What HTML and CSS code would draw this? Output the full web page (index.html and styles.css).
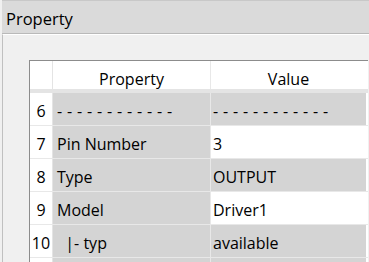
FILE: index.html
```html
<!DOCTYPE html>
<html lang="en">
<head>
    <meta charset="UTF-8">
    <title>Property</title>
    <link rel="stylesheet" href="styles.css">
</head>
<body>
    <div class="title-bar">Property</div>

    <div class="panel">
        <div class="grid">
            <div class="row head">
                <div class="num"></div>
                <div class="cell">Property</div>
                <div class="cell">Value</div>
            </div>
            <div class="row">
                <div class="num">6</div>
                <div class="cell dash">- - - - - - - - - - - -</div>
                <div class="cell dash">- - - - - - - - - - - -</div>
            </div>
            <div class="row">
                <div class="num">7</div>
                <div class="cell">Pin Number</div>
                <div class="cell edit">3</div>
            </div>
            <div class="row">
                <div class="num">8</div>
                <div class="cell">Type</div>
                <div class="cell">OUTPUT</div>
            </div>
            <div class="row">
                <div class="num">9</div>
                <div class="cell">Model</div>
                <div class="cell edit">Driver1</div>
            </div>
            <div class="row">
                <div class="num">10</div>
                <div class="cell">  |- typ</div>
                <div class="cell">available</div>
            </div>
            <div class="row">
                <div class="num"></div>
                <div class="cell"></div>
                <div class="cell"></div>
            </div>
        </div>
    </div>
</body>
</html>
```

FILE: styles.css
```css
body {
    margin: 0;
    background-color: #f0f0f0;
    font-family: "Open Sans", "Noto Sans", sans-serif;
    font-size: 16px;
    color: #000;
    overflow: hidden;
}
.title-bar {
    margin-left: 2px;
    height: 32px;
    padding-left: 4px;
    line-height: 36px;
    font-size: 16.5px;
    background-color: #dadada;
    border-top: 1px solid #c8c8c8;
    border-bottom: 1px solid #b9b9b9;
}
.panel {
    margin-left: 2px;
    height: 300px;
    padding: 25px 0 0 26px;
    border-left: 1px solid #c0c0c0;
    border-top: 1px solid #ffffff;
}
.grid {
    width: 338px;
    background-color: #fff;
    border-left: 1px solid #8c8c8c;
    border-top: 1px solid #8c8c8c;
}
.row {
    display: flex;
    height: 32px;
    border-bottom: 1px solid #e8e8e8;
}
.num {
    width: 22px;
    border-right: 1px solid #e4e4e4;
    text-align: center;
    line-height: 37px;
    background-color: #fff;
}
.cell {
    width: 153px;
    padding-left: 4px;
    line-height: 37px;
    white-space: pre;
    background-color: #d4d4d4;
    border-right: 1px solid #e8e8e8;
}
.cell:last-child {
    width: 153px;
    padding-left: 2px;
    border-right: none;
}
.cell.edit {
    background-color: #fff;
}
.cell.dash {
    letter-spacing: 0.35px;
}
.head {
    height: 28px;
    border-bottom: 4px solid #e4e4e4;
}
.head .cell {
    width: 157px;
    background-color: #fff;
    text-align: center;
    line-height: 36px;
    padding-left: 0;
}
.head .cell:last-child {
    width: 155px;
}
```
